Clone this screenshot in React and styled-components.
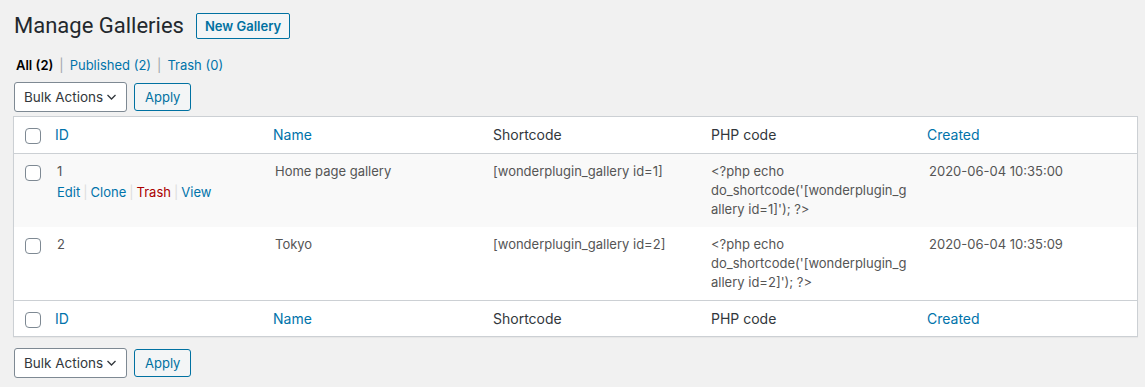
import styled, { createGlobalStyle } from "styled-components"

const GlobalStyle = createGlobalStyle`
    body {
        margin: 0;
        background: #f1f1f1;
        font-family: Inter, "Noto Sans", sans-serif;
        font-size: 13px;
        color: #444;
    }
`;

const galleries = [
    {id: 1, name: "Home page gallery", created: "2020-06-04 10:35:00", alt: true, actions: true},
    {id: 2, name: "Tokyo", created: "2020-06-04 10:35:09", alt: false, actions: false},
];

function Chevron(){
    return(
        <svg width="11" height="10" viewBox="0 0 11 10">
            <path d="M1.5 3 L5.5 7 L9.5 3" fill="none" stroke="#32373c" strokeWidth="1.3" />
        </svg>
    );
}

function BulkBar({top}){
    return(
        <Toolbar top={top}>
            <Select>
                <span>Bulk Actions</span>
                <Chevron />
            </Select>
            <Button>Apply</Button>
        </Toolbar>
    );
}

function HeadRow(){
    return(
        <tr>
            <CheckHead><Checkbox /></CheckHead>
            <SortHead><HeadLink>ID</HeadLink></SortHead>
            <SortHead><HeadLink>Name</HeadLink></SortHead>
            <PlainHead>Shortcode</PlainHead>
            <PlainHead>PHP code</PlainHead>
            <SortHead><HeadLink>Created</HeadLink></SortHead>
        </tr>
    );
}

export default function App(){
    return(
        <Wrap>
            <GlobalStyle />
            <TitleRow>
                <Title>Manage Galleries</Title>
                <TitleAction>New Gallery</TitleAction>
            </TitleRow>
            <Filters>
                <Current>All (2)</Current>
                <Sep>|</Sep>
                <FilterLink>Published (2)</FilterLink>
                <Sep>|</Sep>
                <FilterLink>Trash (0)</FilterLink>
            </Filters>
            <BulkBar top />
            <Table>
                <colgroup>
                    <col style={{width: 33}} />
                    <col />
                    <col />
                    <col />
                    <col />
                    <col />
                </colgroup>
                <thead><HeadRow /></thead>
                <tbody>
                    {galleries.map(g => (
                        <Row key={g.id} alt={g.alt}>
                            <CheckCell><Checkbox /></CheckCell>
                            <Cell>
                                {g.id}
                                {g.actions && (
                                    <RowActions>
                                        <ActionLink>Edit</ActionLink><ActionSep>|</ActionSep>
                                        <ActionLink>Clone</ActionLink><ActionSep>|</ActionSep>
                                        <ActionLink danger>Trash</ActionLink><ActionSep>|</ActionSep>
                                        <ActionLink>View</ActionLink>
                                    </RowActions>
                                )}
                            </Cell>
                            <Cell>{g.name}</Cell>
                            <Cell>[wonderplugin_gallery id={g.id}]</Cell>
                            <Cell>&lt;?php echo do_shortcode('[wonderplugin_gallery id={g.id}]'); ?&gt;</Cell>
                            <Cell>{g.created}</Cell>
                        </Row>
                    ))}
                </tbody>
                <tfoot><HeadRow /></tfoot>
            </Table>
            <BulkBar />
        </Wrap>
    );
}

const Wrap = styled.div`
    padding: 12px 7px 0 13px;
`;

const TitleRow = styled.div`
    display: flex;
    align-items: center;
    gap: 12px;
    height: 28px;
`;

const Title = styled.h1`
    margin: 0;
    font-family: Roboto, "Noto Sans", sans-serif;
    font-size: 22px;
    font-weight: 400;
    line-height: 1.3;
    color: #23282d;
    padding-left: 1px;
`;

const TitleAction = styled.a`
    display: inline-block;
    border: 1px solid #0071a1;
    border-radius: 2px;
    background: #f3f5f6;
    color: #0071a1;
    font-size: 13px;
    font-weight: 600;
    line-height: 1.4;
    padding: 3px 8px;
    cursor: pointer;
`;

const Filters = styled.div`
    display: flex;
    align-items: center;
    margin: 12px 0 0 3px;
    line-height: 2;
    font-size: 13px;
`;

const Current = styled.span`
    color: #000;
    font-weight: 600;
`;

const FilterLink = styled.a`
    color: #0073aa;
`;

const Sep = styled.span`
    color: #a0a5aa;
    padding: 0 6px;
`;

const Toolbar = styled.div`
    display: flex;
    align-items: center;
    gap: 7px;
    margin-top: ${p => p.top ? "4px" : "11px"};
    margin-left: 1px;
    margin-bottom: 4px;
`;

const Select = styled.div`
    box-sizing: border-box;
    display: flex;
    align-items: center;
    justify-content: space-between;
    width: 113px;
    height: 30px;
    padding: 0 9px 0 9px;
    background: #fff;
    border: 1px solid #7e8993;
    border-radius: 3px;
    color: #32373c;
    font-size: 13.5px;
`;

const Button = styled.button`
    box-sizing: border-box;
    height: 28px;
    padding: 0 10px;
    background: #f3f5f6;
    border: 1px solid #0071a1;
    border-radius: 3px;
    color: #0071a1;
    font-family: inherit;
    font-size: 13px;
`;

const Table = styled.table`
    width: 100%;
    table-layout: fixed;
    border-spacing: 0;
    background: #fff;
    border: 1px solid #ccd0d4;
    box-shadow: 0 1px 1px rgba(0,0,0,0.04);

    thead th { border-bottom: 1px solid #ccd0d4; }
    tfoot th { border-top: 1px solid #ccd0d4; }
`;

const CheckHead = styled.th`
    padding: 11px 0 0 11px;
    vertical-align: top;
    text-align: left;
`;

const SortHead = styled.th`
    padding: 0;
    text-align: left;
    font-weight: 400;
`;

const HeadLink = styled.a`
    display: block;
    padding: 8px;
    font-size: 14px;
    line-height: 1.4;
    color: #0073aa;
`;

const PlainHead = styled.th`
    padding: 8px 10px;
    text-align: left;
    font-weight: 400;
    font-size: 14px;
    line-height: 1.4;
    color: #32373c;
`;

const Row = styled.tr`
    background: ${p => p.alt ? "#f9f9f9" : "#fff"};
`;

const CheckCell = styled.th`
    padding: 11px 0 0 11px;
    vertical-align: top;
    text-align: left;
`;

const Cell = styled.td`
    padding: 8px 10px;
    vertical-align: top;
    font-size: 13px;
    line-height: 19px;
    color: #555;
    overflow-wrap: anywhere;
`;

const RowActions = styled.div`
    padding-top: 2px;
    font-size: 13px;
`;

const ActionSep = styled.span`
    color: #ddd;
    padding: 0 3px;
`;

const ActionLink = styled.a`
    color: ${p => p.danger ? "#a00" : "#0073aa"};
`;

const Checkbox = styled.span`
    display: block;
    box-sizing: border-box;
    width: 16px;
    height: 16px;
    border: 1px solid #7e8993;
    border-radius: 4px;
    background: #fff;
`;
